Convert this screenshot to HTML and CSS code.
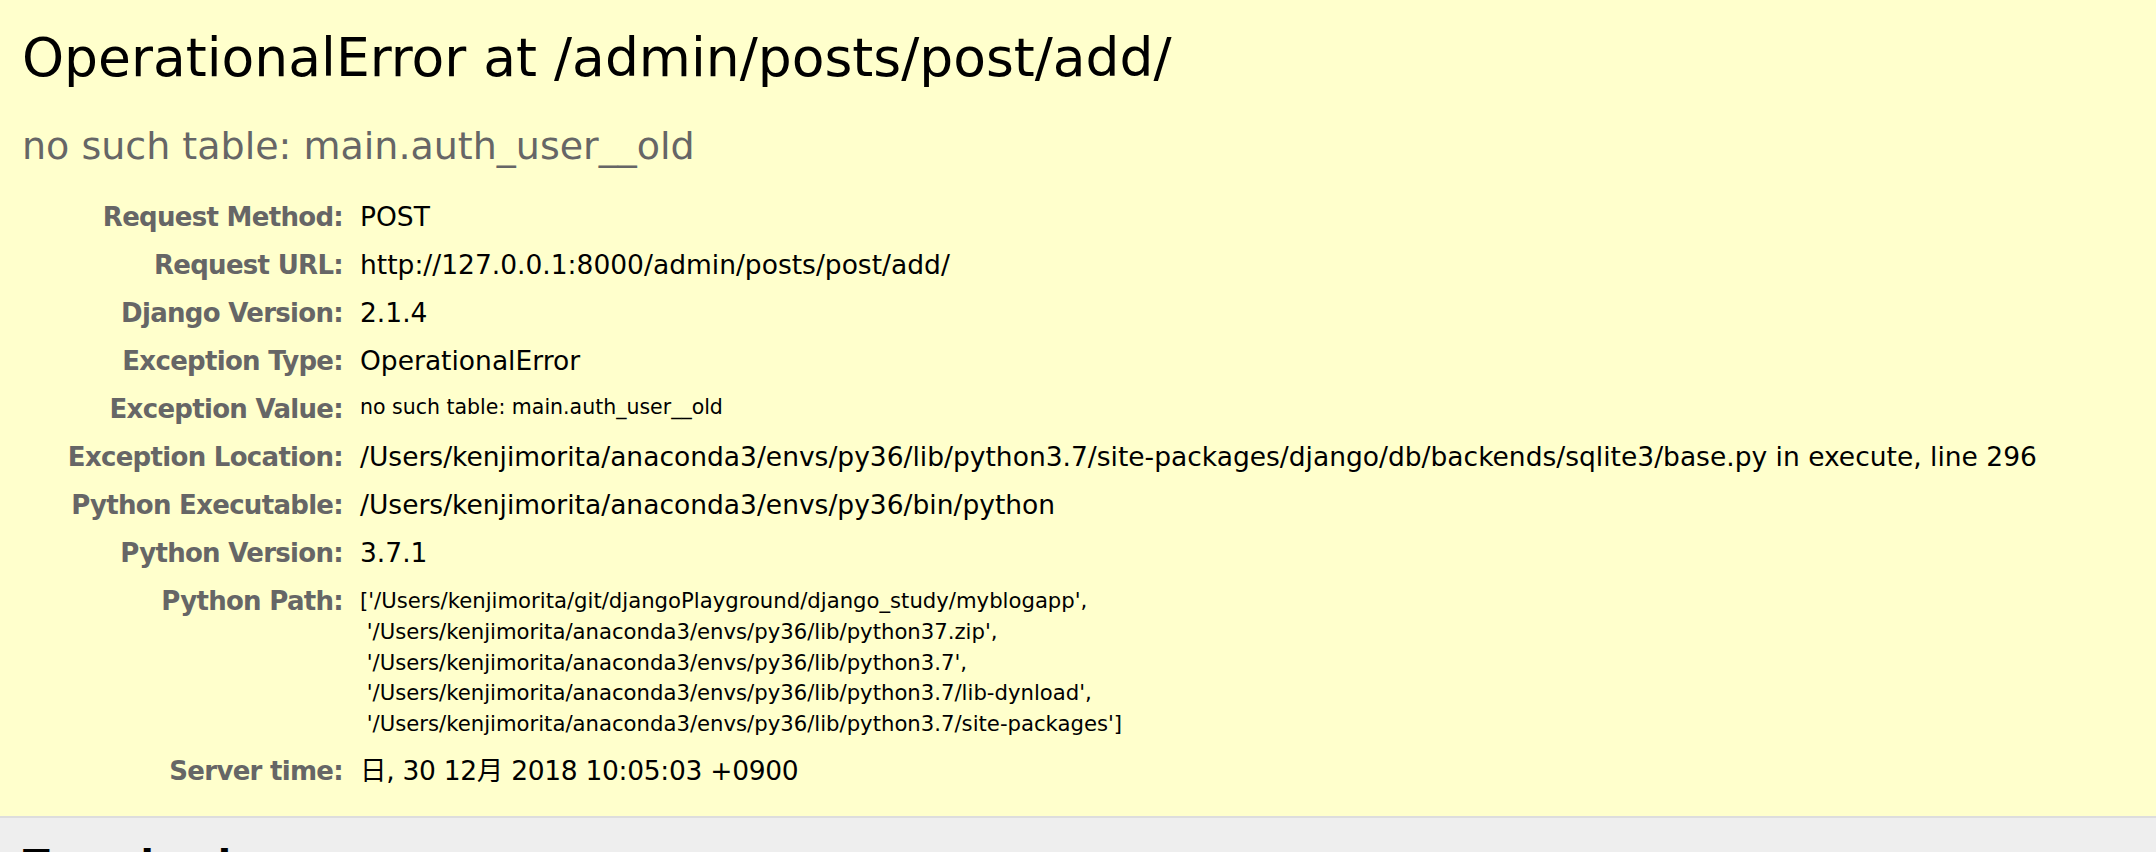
FILE: index.html
```html
<!DOCTYPE html>
<html lang="ja">
<head>
<meta charset="utf-8">
<title>OperationalError at /admin/posts/post/add/</title>
<link rel="stylesheet" href="styles.css">
</head>
<body>
<div class="summary">
  <h1 class="title">OperationalError at /admin/posts/post/add/</h1>
  <h2 class="subtitle">no such table: main.auth_user__old</h2>
  <div class="meta">
    <div class="meta-key">Request Method:</div>
    <div class="meta-val">POST</div>
    <div class="meta-key">Request URL:</div>
    <div class="meta-val">http://127.0.0.1:8000/admin/posts/post/add/</div>
    <div class="meta-key">Django Version:</div>
    <div class="meta-val">2.1.4</div>
    <div class="meta-key">Exception Type:</div>
    <div class="meta-val">OperationalError</div>
    <div class="meta-key">Exception Value:</div>
    <div class="meta-val"><pre class="exc-value">no such table: main.auth_user__old</pre></div>
    <div class="meta-key">Exception Location:</div>
    <div class="meta-val">/Users/kenjimorita/anaconda3/envs/py36/lib/python3.7/site-packages/django/db/backends/sqlite3/base.py in execute, line 296</div>
    <div class="meta-key">Python Executable:</div>
    <div class="meta-val">/Users/kenjimorita/anaconda3/envs/py36/bin/python</div>
    <div class="meta-key">Python Version:</div>
    <div class="meta-val">3.7.1</div>
    <div class="meta-key">Python Path:</div>
    <div class="meta-val"><pre class="py-path">['/Users/kenjimorita/git/djangoPlayground/django_study/myblogapp',
 '/Users/kenjimorita/anaconda3/envs/py36/lib/python37.zip',
 '/Users/kenjimorita/anaconda3/envs/py36/lib/python3.7',
 '/Users/kenjimorita/anaconda3/envs/py36/lib/python3.7/lib-dynload',
 '/Users/kenjimorita/anaconda3/envs/py36/lib/python3.7/site-packages']</pre></div>
    <div class="meta-key">Server time:</div>
    <div class="meta-val server-time">日, 30 12月 2018 10:05:03 +0900</div>
  </div>
</div>
<div class="traceback">
  <h2 class="traceback-title">Traceback <span class="traceback-switch">Switch to copy-and-paste view</span></h2>
</div>
</body>
</html>
```
FILE: styles.css
```css
html, body {
  margin: 0;
  padding: 0;
}

body {
  font-family: "DejaVu Sans", "Noto Sans CJK JP", sans-serif;
  color: #000;
  background: #fff;
}

.summary {
  background: #ffc;
  padding: 27px 0 21px 22px;
  border-bottom: 2px solid #ddd;
}

.title {
  margin: 0;
  font-size: 53.5px;
  line-height: 62px;
  font-weight: normal;
  color: #000;
}

.subtitle {
  margin: 34px 0 24px;
  font-size: 38px;
  line-height: 46px;
  font-weight: normal;
  color: #666;
}

.meta {
  display: grid;
  grid-template-columns: 321px 1fr;
  column-gap: 17px;
}

.meta-key {
  padding: 2px 0;
  text-align: right;
  font-weight: bold;
  color: #666;
  font-size: 26px;
  letter-spacing: -0.7px;
  line-height: 44px;
  white-space: nowrap;
}

.meta-val {
  padding: 2px 0;
  font-size: 26.5px;
  line-height: 44px;
  color: #000;
  white-space: nowrap;
}

.server-time {
  letter-spacing: -0.3px;
}

.exc-value,
.py-path {
  margin: 0;
  font-family: "DejaVu Sans", "Noto Sans CJK JP", sans-serif;
}

.exc-value {
  font-size: 20.5px;
  line-height: 40px;
}

.py-path {
  font-size: 21.2px;
  line-height: 30.8px;
  padding: 7px 0 5.5px;
}

.traceback {
  background: #eee;
  padding: 23.5px 23px 20px;
}

.traceback-title {
  margin: 0;
  font-size: 39px;
  line-height: 46px;
  font-weight: bold;
}

.traceback-switch {
  font-size: 80%;
  color: #666;
  font-weight: normal;
}
```
